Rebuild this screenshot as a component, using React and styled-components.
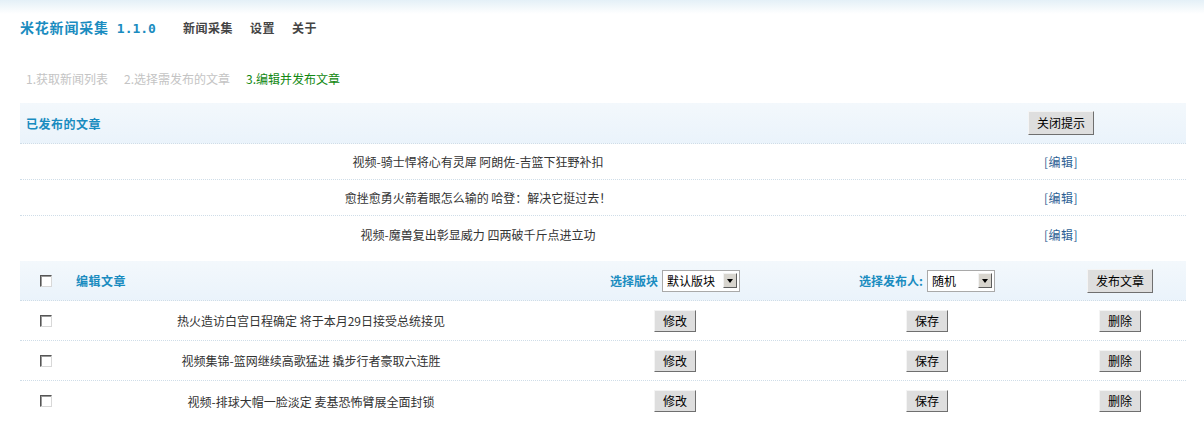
import React from 'react';
import styled, { createGlobalStyle } from 'styled-components';

const GlobalStyle = createGlobalStyle`
  body {
    margin: 0;
    background: linear-gradient(#e4f0f7 0, #ffffff 14px) no-repeat;
    font-family: "Noto Sans CJK SC", "DejaVu Sans", sans-serif;
    font-size: 12px;
    color: #333;
  }
`;

const Page = styled.div`
  padding: 0 18px 0 20px;
`;

const Header = styled.div`
  height: 54px;
  display: flex;
  align-items: center;
`;

const Logo = styled.div`
  font-size: 14px;
  font-weight: bold;
  color: #1a8cc0;
  margin-right: 27px;
  letter-spacing: 0.8px;
  display: flex;
  align-items: baseline;
  gap: 8px;
`;

const Version = styled.span`
  font-family: "DejaVu Sans Mono", "Liberation Mono", monospace;
  font-size: 13px;
  letter-spacing: 0;
`;

const Nav = styled.div`
  display: flex;
  gap: 17px;
`;

const NavItem = styled.span`
  font-weight: bold;
  color: #444;
  letter-spacing: 0.5px;
`;

const Steps = styled.div`
  height: 49px;
  display: flex;
  align-items: center;
  gap: 16px;
  padding-left: 6px;
`;

const Step = styled.span`
  color: ${p => (p.$active ? '#118811' : '#c4c4c4')};
`;

const Table = styled.div`
  margin-top: ${p => p.$gap || 0}px;
`;

const Row = styled.div`
  display: grid;
  grid-template-columns: ${p => p.$cols};
  height: ${p => p.$h}px;
  align-items: center;
  background: ${p => (p.$head ? 'linear-gradient(#f3f8fc, #eaf3fb)' : '#fff')};
  border-bottom: 1px dotted #cfdde8;
  box-sizing: border-box;
  &:last-child {
    border-bottom: none;
  }
`;

const Cell = styled.div`
  display: flex;
  align-items: center;
  justify-content: ${p => p.$align || 'center'};
  padding-left: ${p => p.$pl || 0}px;
  gap: 4px;
`;

const HeadTitle = styled.span`
  font-weight: bold;
  color: #1a8cc0;
  letter-spacing: 0.5px;
`;

const Label = styled.span`
  font-weight: bold;
  color: #1a8cc0;
`;

const EditLink = styled.a`
  color: #2d5f94;
  text-decoration: none;
  cursor: pointer;
  letter-spacing: 0.5px;
`;

const Button = styled.button`
  font-family: inherit;
  font-size: 12px;
  color: #000;
  background: #dedede;
  border: 1px solid;
  border-color: #f4f4f4 #6f6f6f #6f6f6f #f4f4f4;
  height: ${p => (p.$wide ? 24 : 22)}px;
  width: ${p => (p.$wide ? 66 : 42)}px;
  padding: 0;
  line-height: 1;
`;

const Check = styled.span`
  width: 10px;
  height: 10px;
  border: 1px solid;
  border-color: #555 #d8d8d8 #d8d8d8 #555;
  box-shadow: inset 1px 1px 0 #999;
  background: #fff;
  display: inline-block;
`;

const Select = styled.span`
  display: inline-flex;
  align-items: center;
  justify-content: space-between;
  width: ${p => p.$w}px;
  height: 22px;
  box-sizing: border-box;
  border: 1px solid #a9a9a9;
  background: #fff;
  padding: 0 2px 0 4px;
  color: #000;
`;

const Arrow = styled.span`
  width: 14px;
  height: 15px;
  box-sizing: border-box;
  background: #d8d5ce;
  border: 1px solid;
  border-color: #f2f2f2 #5e5e5e #5e5e5e #f2f2f2;
  display: flex;
  align-items: center;
  justify-content: center;
  &::after {
    content: '';
    border-left: 3px solid transparent;
    border-right: 3px solid transparent;
    border-top: 4px solid #000;
  }
`;

const published = [
  '视频-骑士悍将心有灵犀 阿朗佐-吉篮下狂野补扣',
  '愈挫愈勇火箭着眼怎么输的 哈登：解决它挺过去！',
  '视频-魔兽复出彰显威力 四两破千斤点进立功',
];

const drafts = [
  '热火造访白宫日程确定 将于本月29日接受总统接见',
  '视频集锦-篮网继续高歌猛进 撬步行者豪取六连胜',
  '视频-排球大帽一脸淡定 麦基恐怖臂展全面封锁',
];

const PUB_COLS = '916px 1fr';
const EDIT_COLS = '52px 478px 250px 254px 1fr';

export default function App() {
  return (
    <Page>
      <GlobalStyle />
      <Header>
        <Logo>
          米花新闻采集<Version>1.1.0</Version>
        </Logo>
        <Nav>
          <NavItem>新闻采集</NavItem>
          <NavItem>设置</NavItem>
          <NavItem>关于</NavItem>
        </Nav>
      </Header>
      <Steps>
        <Step>1.获取新闻列表</Step>
        <Step>2.选择需发布的文章</Step>
        <Step $active>3.编辑并发布文章</Step>
      </Steps>

      <Table>
        <Row $cols={PUB_COLS} $h={41} $head>
          <Cell $align="flex-start" $pl={6}>
            <HeadTitle>已发布的文章</HeadTitle>
          </Cell>
          <Cell>
            <Button $wide>关闭提示</Button>
          </Cell>
        </Row>
        {published.map(t => (
          <Row key={t} $cols={PUB_COLS} $h={36}>
            <Cell>{t}</Cell>
            <Cell>
              <EditLink>[编辑]</EditLink>
            </Cell>
          </Row>
        ))}
      </Table>

      <Table $gap={9}>
        <Row $cols={EDIT_COLS} $h={40} $head>
          <Cell $pl={0}>
            <Check />
          </Cell>
          <Cell $align="flex-start" $pl={4}>
            <HeadTitle>编辑文章</HeadTitle>
          </Cell>
          <Cell>
            <Label>选择版块</Label>
            <Select $w={78}>
              默认版块
              <Arrow />
            </Select>
          </Cell>
          <Cell>
            <Label>选择发布人:</Label>
            <Select $w={68}>
              随机
              <Arrow />
            </Select>
          </Cell>
          <Cell>
            <Button $wide>发布文章</Button>
          </Cell>
        </Row>
        {drafts.map(t => (
          <Row key={t} $cols={EDIT_COLS} $h={40}>
            <Cell>
              <Check />
            </Cell>
            <Cell>{t}</Cell>
            <Cell>
              <Button>修改</Button>
            </Cell>
            <Cell>
              <Button>保存</Button>
            </Cell>
            <Cell>
              <Button>删除</Button>
            </Cell>
          </Row>
        ))}
      </Table>
    </Page>
  );
}
